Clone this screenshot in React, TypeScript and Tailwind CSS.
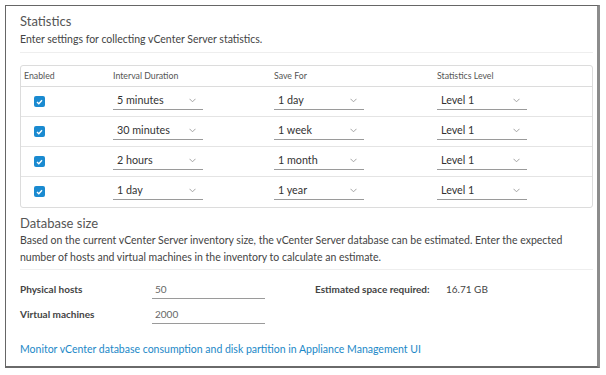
import React from "react";

const font = { fontFamily: "Lato, 'Open Sans', sans-serif" };

function Chevron() {
  return (
    <svg width="7" height="5" viewBox="0 0 7 5" className="shrink-0">
      <path d="M0.5 0.8 L3.5 3.8 L6.5 0.8" fill="none" stroke="#9a9a9a" strokeWidth="0.9" />
    </svg>
  );
}

function Select({ value }: { value: string }) {
  return (
    <div className="mt-[4px] w-[90px] h-[19px] flex items-center justify-between pl-[4px] pr-[7px] border-b border-[#9a9a9a] text-[10.75px] text-[#333]">
      <span>{value}</span>
      <Chevron />
    </div>
  );
}

function Check() {
  return (
    <div className="mt-[9px] w-[11px] h-[11px] rounded-[2px] bg-[#1a8ad0] flex items-center justify-center">
      <svg width="7" height="6" viewBox="0 0 7 6">
        <path d="M1 3 L2.8 4.7 L6 1.2" fill="none" stroke="#fff" strokeWidth="1.4" />
      </svg>
    </div>
  );
}

const rows = [
  ["5 minutes", "1 day", "Level 1"],
  ["30 minutes", "1 week", "Level 1"],
  ["2 hours", "1 month", "Level 1"],
  ["1 day", "1 year", "Level 1"],
];

export default function App() {
  return (
    <div className="w-[606px] h-[375px] bg-white pt-[5px] pl-[5px]" style={font}>
      <div className="w-[595px] h-[363px] border-l border-t border-[#666] border-r-[3px] border-r-[#8c8c8c] border-b-2 border-b-[#6a6a6a] pl-[14px] pr-[4px] pt-[7px]">
        <div className="text-[13px] leading-[16px] text-[#555]">Statistics</div>
        <div className="mt-[2px] text-[10.5px] leading-[16px] text-[#444]">Enter settings for collecting vCenter Server statistics.</div>
        <div className="mt-[5px] h-px bg-[#eeeeee]" />
        <div className="mt-[12px] border border-[#dcdcdc] rounded-[3px]">
          <div className="grid grid-cols-[92px_161px_163px_1fr] h-[21px] items-center border-b border-[#dcdcdc] text-[8.75px] text-[#555]">
            <div className="pl-[3px]">Enabled</div>
            <div>Interval Duration</div>
            <div>Save For</div>
            <div>Statistics Level</div>
          </div>
          {rows.map((r, i) => (
            <div
              key={i}
              className={`grid grid-cols-[92px_161px_163px_1fr] h-[30px] items-start ${i < 3 ? "border-b border-[#e4e4e4]" : ""}`}
            >
              <div className="pl-[13px]">
                <Check />
              </div>
              <Select value={r[0]} />
              <Select value={r[1]} />
              <Select value={r[2]} />
            </div>
          ))}
        </div>
        <div className="mt-[7px] text-[13px] leading-[16px] text-[#555]">Database size</div>
        <div className="mt-[1px] text-[10.5px] leading-[17px] text-[#444]">
          Based on the current vCenter Server inventory size, the vCenter Server database can be estimated. Enter the expected number of hosts and virtual machines in the inventory to calculate an estimate.
        </div>
        <div className="mt-[3px] h-px bg-[#eeeeee]" />
        <div className="mt-[9px] flex">
          <div className="w-[132px] text-[10px] font-bold text-[#444] leading-[20px]">
            <div>Physical hosts</div>
            <div className="mt-[5px]">Virtual machines</div>
          </div>
          <div className="w-[163px]">
            <div className="w-[113px] h-[20px] border-b border-[#9a9a9a] pl-[3px] text-[10px] leading-[20px] text-[#666]">50</div>
            <div className="mt-[5px] w-[113px] h-[20px] border-b border-[#9a9a9a] pl-[3px] text-[10px] leading-[20px] text-[#666]">2000</div>
          </div>
          <div className="w-[131px] text-[10px] font-bold text-[#444] leading-[20px]">Estimated space required:</div>
          <div className="text-[10px] text-[#444] leading-[20px]">16.71 GB</div>
        </div>
        <div className="mt-[17px] text-[10.5px] leading-[16px] text-[#1b88c7]">
          Monitor vCenter database consumption and disk partition in Appliance Management UI
        </div>
      </div>
    </div>
  );
}
